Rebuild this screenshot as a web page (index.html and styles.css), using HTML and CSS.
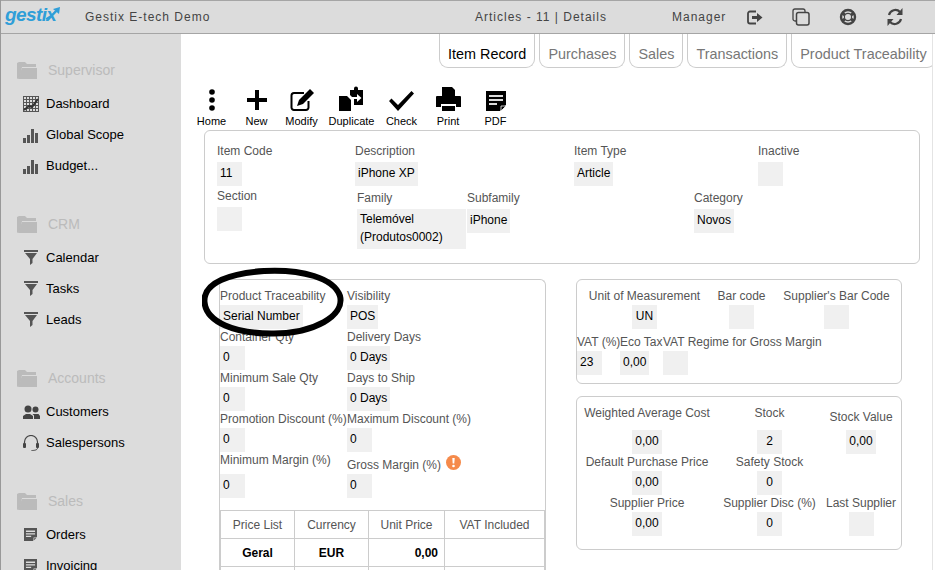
FILE: index.html
```html
<!DOCTYPE html>
<html>
	<head>
		<meta charset="utf-8">
		<title>Articles - 11 | Details</title>
		<link rel="stylesheet" href="styles.css">
	</head>
	<body>
		<svg class="defs" width="0" height="0">
			<symbol id="folder" viewBox="0 0 20 18">
				<path d="M2 1h6l2 2h9v3H5L3 16l-3 2V2z" fill="#bbb"/>
				<path d="M5 7h15v11H1z" fill="#bbb"/>
			</symbol>
			<symbol id="bars" viewBox="0 0 16 16">
				<path d="M0 11h3v5H0zM4 8h3v8H4zM8 2h3v14H8zM12 6h3v10h-3z" fill="#555"/>
			</symbol>
			<symbol id="funnel" viewBox="0 0 14 15">
				<path d="M0 0h14v2H0zM1 3h12L8.500 9v4L6 15V9z" fill="#555"/>
			</symbol>
			<symbol id="doc" viewBox="0 0 20 20">
				<path d="M0 0h20v14l-6 6H0z" fill="currentColor"/>
				<path d="M3 4h14v2H3zM3 8h14v2H3zM3 12h8v2H3z" fill="#dcdcdc"/>
				<path d="M15 20v-5h5z" fill="currentColor" stroke="#fff" stroke-width=".8"/>
			</symbol>
		</svg>

		<header class="topbar">
			<div class="logo">
				<span class="logo-text">gestix</span>
				<svg class="logo-arrow" width="14" height="13" viewBox="0 0 14 13"><path d="M0 12C4 10 7 8 10 4" fill="none" stroke="#2f9ed8" stroke-width="2"/><path d="M7 2l7-2-1 7z" fill="#2f9ed8"/></svg>
			</div>
			<div class="app-name">Gestix E-tech Demo</div>
			<div class="page-name">Articles - 11 | Details</div>
			<div class="user-name">Manager</div>
			<div class="top-icons">
				<svg width="16" height="15" viewBox="0 0 16 15"><path d="M9 1.500H3a2 2 0 0 0-2 2v8a2 2 0 0 0 2 2h6" fill="none" stroke="#444" stroke-width="1.800"/><path d="M5 6h5V3l5.500 4.500L10 12V9H5z" fill="#444"/></svg>
				<svg width="18" height="18" viewBox="0 0 18 18"><path d="M4 13H3a2 2 0 0 1-2-2V3a2 2 0 0 1 2-2h8a2 2 0 0 1 2 2v1" fill="none" stroke="#444" stroke-width="1.300"/><rect x="4.500" y="4.500" width="12.500" height="12.500" rx="2" fill="none" stroke="#444" stroke-width="1.500"/></svg>
				<svg width="18" height="18" viewBox="0 0 18 18"><circle cx="9" cy="9" r="7" fill="none" stroke="#444" stroke-width="2.400"/><circle cx="9" cy="9" r="3.600" fill="none" stroke="#444" stroke-width="1.200"/><path d="M3 5l3 2M15 5l-3 2M3 13l3-2M15 13l-3-2" stroke="#444" stroke-width="3"/></svg>
				<svg width="18" height="18" viewBox="0 0 18 18"><path d="M3 7a6.500 6.500 0 0 1 11-3" fill="none" stroke="#444" stroke-width="2.200"/><path d="M16.500 0v7h-6z" fill="#444"/><path d="M15 11a6.500 6.500 0 0 1-11 3" fill="none" stroke="#444" stroke-width="2.200"/><path d="M1.500 18v-7h6z" fill="#444"/></svg>
			</div>
		</header>

		<div class="layout">
			<nav class="sidebar">
				<div class="nav-group">
					<div class="nav-title"><svg width="20" height="18"><use href="#folder"/></svg>Supervisor</div>
					<a class="nav-item">
						<svg width="16" height="16" viewBox="0 0 16 16"><path d="M0 .5h16M0 3.500h16M0 6.500h16M0 9.500h16M0 12.500h16M0 15.500h16M.5 0v16M3.500 0v16M6.500 0v16M9.500 0v16M12.500 0v16M15.500 0v16" stroke="#555"/><path d="M1 14l5-4 3 1 6-8" fill="none" stroke="#333" stroke-width="2"/></svg>
						Dashboard
					</a>
					<a class="nav-item"><svg width="16" height="16"><use href="#bars"/></svg>Global Scope</a>
					<a class="nav-item"><svg width="16" height="16"><use href="#bars"/></svg>Budget...</a>
				</div>
				<div class="nav-group">
					<div class="nav-title"><svg width="20" height="18"><use href="#folder"/></svg>CRM</div>
					<a class="nav-item"><svg class="nav-funnel" width="14" height="15"><use href="#funnel"/></svg>Calendar</a>
					<a class="nav-item"><svg class="nav-funnel" width="14" height="15"><use href="#funnel"/></svg>Tasks</a>
					<a class="nav-item"><svg class="nav-funnel" width="14" height="15"><use href="#funnel"/></svg>Leads</a>
				</div>
				<div class="nav-group">
					<div class="nav-title"><svg width="20" height="18"><use href="#folder"/></svg>Accounts</div>
					<a class="nav-item">
						<svg class="nav-people" width="17" height="14" viewBox="0 0 17 14"><circle cx="5" cy="4" r="3.500" fill="#444"/><path d="M0 14v-3l3-2h4l3 2v3z" fill="#444"/><circle cx="12.500" cy="4.500" r="3" fill="#444"/><path d="M11 14v-3.500L9.500 9h6l1.500 2v3z" fill="#444"/></svg>
						Customers
					</a>
					<a class="nav-item">
						<svg width="16" height="16" viewBox="0 0 16 16"><path d="M1.500 9V7a6.500 6.500 0 0 1 13 0v2" fill="none" stroke="#444" stroke-width="1.200"/><rect x="0" y="8" width="3" height="5" rx="1" fill="#444"/><rect x="13" y="8" width="3" height="5" rx="1" fill="#444"/><path d="M14.500 13c0 2-3 2.500-6 2.500" fill="none" stroke="#444"/></svg>
						Salespersons
					</a>
				</div>
				<div class="nav-group">
					<div class="nav-title"><svg width="20" height="18"><use href="#folder"/></svg>Sales</div>
					<a class="nav-item"><svg class="nav-doc" width="13" height="13"><use href="#doc"/></svg>Orders</a>
					<a class="nav-item"><svg class="nav-doc" width="13" height="13"><use href="#doc"/></svg>Invoicing</a>
				</div>
			</nav>

			<main class="content">
				<div class="tabs">
					<div class="tab tab-active">Item Record</div>
					<div class="tab">Purchases</div>
					<div class="tab">Sales</div>
					<div class="tab">Transactions</div>
					<div class="tab">Product Traceability</div>
				</div>

				<div class="toolbar">
					<div class="tool tool-home">
						<svg width="22" height="22" viewBox="0 0 22 22"><circle cx="11" cy="3" r="2.800"/><circle cx="11" cy="11" r="2.800"/><circle cx="11" cy="19" r="2.800"/></svg>
						Home
					</div>
					<div class="tool">
						<svg width="22" height="22" viewBox="0 0 22 22"><path d="M9 1h4v8h8v4h-8v8H9v-8H1V9h8z"/></svg>
						New
					</div>
					<div class="tool">
						<svg width="24" height="22" viewBox="0 0 24 22"><path d="M14 4H4a2.500 2.500 0 0 0-2.500 2.500v12A2.500 2.500 0 0 0 4 21h12a2.500 2.500 0 0 0 2.500-2.500V12" fill="none" stroke="#000" stroke-width="2"/><path d="M20 0l4 4-11 11-6 2 2-6z"/></svg>
						Modify
					</div>
					<div class="tool tool-wide">
						<svg width="25" height="25" viewBox="0 0 25 25"><path d="M0 10h8l4 4v11H0z"/><path d="M11 4h4V2.500a2 2 0 0 1 4 0V4h5v15h-9v-6l-4-4z"/><path d="M12 11h6V8l4.500 4-4.500 4v-3h-6z" fill="#fff"/></svg>
						Duplicate
					</div>
					<div class="tool">
						<svg width="25" height="20" viewBox="0 0 25 20"><path d="M0 10l2.500-2.500L9 14 22.500 0 25 2.500 9 20z"/></svg>
						Check
					</div>
					<div class="tool tool-print">
						<svg width="25" height="24" viewBox="0 0 25 24"><path d="M6 0h10l3 3v7H6z"/><path d="M1 9h23a1 1 0 0 1 1 1v10h-5v-3H5v3H0V10a1 1 0 0 1 1-1z"/><path d="M6 19h13v5H6z"/></svg>
						Print
					</div>
					<div class="tool tool-pdf">
						<svg class="pdf-icon" width="20" height="20"><use href="#doc"/></svg>
						PDF
					</div>
				</div>

				<section class="panel panel-item">
					<div class="item-row item-row-top">
						<div class="field"><label>Item Code</label><span class="value">11</span></div>
						<div class="field"><label>Description</label><span class="value">iPhone XP</span></div>
						<div class="field"><label>Item Type</label><span class="value">Article</span></div>
						<div class="field"><label>Inactive</label><span class="value"></span></div>
					</div>
					<div class="item-row item-row-bottom">
						<div class="field"><label>Section</label><span class="value"></span></div>
						<div class="field field-low"><label>Family</label><span class="value value-block">Telemóvel (Produtos0002)</span></div>
						<div class="field field-low"><label>Subfamily</label><span class="value">iPhone</span></div>
						<div class="field field-low"><label>Category</label><span class="value">Novos</span></div>
					</div>
				</section>

				<div class="columns">
					<section class="panel panel-left">
						<svg class="mark" width="146" height="74" viewBox="0 0 146 74">
							<path d="M62 5C100 3 132 12 138 30C143 50 112 67 72 67.500C33 68 4 56 2.500 36C1 16 30 7 62 5z" fill="none" stroke="#000" stroke-width="6"/>
						</svg>
						<div class="left-fields">
							<div class="field"><label>Product Traceability</label><span class="value">Serial Number</span></div>
							<div class="field"><label>Visibility</label><span class="value">POS</span></div>
							<div class="field"><label>Container Qty</label><span class="value">0</span></div>
							<div class="field"><label>Delivery Days</label><span class="value">0 Days</span></div>
							<div class="field"><label>Minimum Sale Qty</label><span class="value">0</span></div>
							<div class="field"><label>Days to Ship</label><span class="value">0 Days</span></div>
							<div class="field"><label>Promotion Discount (%)</label><span class="value">0</span></div>
							<div class="field"><label>Maximum Discount (%)</label><span class="value">0</span></div>
							<div class="field field-margin"><label>Minimum Margin (%)</label><span class="value">0</span></div>
							<div class="field field-margin">
								<label class="label-low">Gross Margin (%)<svg class="warn" width="15" height="15" viewBox="0 0 15 15"><circle cx="7.500" cy="7.500" r="7.500" fill="#f58a4b"/><path d="M6.300 3h2.400l-.4 5.500H6.700z" fill="#fff"/><circle cx="7.500" cy="11" r="1.300" fill="#fff"/></svg></label>
								<span class="value">0</span>
							</div>
						</div>
						<table class="prices">
							<tr><th class="col-list">Price List</th><th class="col-cur">Currency</th><th class="col-price">Unit Price</th><th>VAT Included</th></tr>
							<tr><td>Geral</td><td>EUR</td><td class="num">0,00</td><td></td></tr>
							<tr><td></td><td></td><td></td><td></td></tr>
						</table>
					</section>

					<div class="right-col">
						<section class="panel panel-units">
							<div class="units-top">
								<div class="field"><label>Unit of Measurement</label><span class="value">UN</span></div>
								<div class="field"><label>Bar code</label><span class="value"></span></div>
								<div class="field"><label>Supplier's Bar Code</label><span class="value"></span></div>
							</div>
							<div class="units-bottom">
								<div class="field"><label>VAT (%)</label><span class="value">23</span></div>
								<div class="field"><label>Eco Tax</label><span class="value">0,00</span></div>
								<div class="field"><label>VAT Regime for Gross Margin</label><span class="value"></span></div>
							</div>
						</section>
						<section class="panel panel-stock">
							<div class="field field-tall"><label>Weighted Average Cost</label><span class="value">0,00</span></div>
							<div class="field field-tall"><label>Stock</label><span class="value">2</span></div>
							<div class="field field-tall"><label class="label-mid">Stock Value</label><span class="value">0,00</span></div>
							<div class="field"><label>Default Purchase Price</label><span class="value">0,00</span></div>
							<div class="field"><label>Safety Stock</label><span class="value">0</span></div>
							<div class="field"></div>
							<div class="field"><label>Supplier Price</label><span class="value">0,00</span></div>
							<div class="field"><label>Supplier Disc (%)</label><span class="value">0</span></div>
							<div class="field"><label>Last Supplier</label><span class="value"></span></div>
						</section>
					</div>
				</div>
			</main>
		</div>
	</body>
</html>
```

FILE: styles.css
```css
* {
	margin: 0;
	padding: 0;
	box-sizing: border-box;
}

html,
body {
	height: 570px;
	overflow: hidden;
}

body {
	font-family: "Liberation Sans", Arial, sans-serif;
	font-size: 12px;
	color: #000;
	background-color: #fff;
	border-left: 1px solid #999;
	display: flex;
	flex-direction: column;
}

.defs {
	position: absolute;
}

/* top bar */
.topbar {
	height: 34px;
	flex: none;
	display: flex;
	align-items: center;
	background-color: #dcdcdc;
	border-top: 1px solid #a5a5a5;
	border-bottom: 1px solid #a5a5a5;
	color: #444;
	letter-spacing: 1px;
	white-space: nowrap;
}

.logo {
	width: 84px;
	position: relative;
	padding-left: 4px;
}

.logo-text {
	font-size: 19px;
	font-style: italic;
	font-weight: bold;
	letter-spacing: -.6px;
	line-height: 26px;
	color: #2f9ed8;
	position: relative;
	top: -2px;
}

.logo-arrow {
	position: absolute;
	left: 45px;
	top: 3px;
}

.app-name {
	width: 390px;
}

.page-name {
	width: 197px;
}

.user-name {
	width: 75px;
}

.top-icons {
	display: flex;
	align-items: center;
	gap: 29px;
}

.top-icons svg {
	display: block;
}

.layout {
	flex: 1;
	display: flex;
	min-height: 0;
}

/* sidebar */
.sidebar {
	width: 180px;
	flex: none;
	background-color: #dcdcdc;
	padding-top: 27px;
	overflow: hidden;
}

.nav-group {
	padding-left: 16px;
	height: 154px;
}

.nav-group:nth-child(3) {
	height: 123px;
}

.nav-title {
	display: flex;
	align-items: center;
	gap: 11px;
	height: 18px;
	font-size: 14px;
	color: #bbb;
}

.nav-item {
	display: flex;
	align-items: center;
	height: 31px;
	font-size: 13px;
	gap: 7px;
	padding-left: 6px;
	position: relative;
	top: 9px;
}

.nav-doc {
	color: #555;
	margin: 0 2px 0 1px;
}

.nav-funnel {
	margin: 0 1px;
}

.nav-people {
	margin-right: -1px;
}

/* content */
.content {
	flex: 1;
	min-width: 0;
	overflow: hidden;
	border-right: 1px solid #e4e4e4;
	margin-right: 2px;
}

.tabs {
	display: flex;
	gap: 4px;
	padding-left: 258px;
	height: 34px;
}

.tab {
	flex: none;
	height: 34px;
	padding: 12px 8px 0;
	font-size: 14.400px;
	line-height: 17px;
	color: #777;
	border: 1px solid #ccc;
	border-top: 0;
	border-radius: 0 0 9px 9px;
	white-space: nowrap;
}

.tab-active {
	color: #000;
}

.toolbar {
	display: flex;
	padding: 16px 0 0 8px;
	height: 62px;
}

.tool {
	width: 45px;
	flex: none;
	display: flex;
	flex-direction: column;
	align-items: center;
	justify-content: flex-end;
	font-size: 11px;
	line-height: 13px;
	padding-bottom: 2px;
}

.tool svg {
	margin-bottom: 4px;
}

.tool-wide {
	width: 55px;
}

.tool-print {
	width: 48px;
}

.tool-pdf {
	width: 47px;
}

.pdf-icon {
	color: #000;
}

/* form pieces */
.panel {
	border: 1px solid #ccc;
	border-radius: 6px;
}

.field label {
	display: block;
	height: 17px;
	line-height: 17px;
	color: #555;
	white-space: nowrap;
}

.value {
	display: inline-block;
	min-width: 25px;
	height: 24px;
	padding: 0 3px;
	line-height: 23px;
	color: #000;
	background-color: #f0f0f0;
	vertical-align: top;
}

/* item panel */
.panel-item {
	margin: 0 12px 0 23px;
	height: 134px;
	padding: 12px 12px 0;
}

.panel-item .field label {
	height: 19px;
}

.item-row {
	display: grid;
}

.item-row-top {
	grid-template-columns: 138px 219px 184px auto;
	height: 45px;
}

.item-row-bottom {
	grid-template-columns: 140px 110px 227px auto;
}

.field-low {
	padding-top: 2px;
}

.value-block {
	display: block;
	width: 109px;
	height: 40px;
	line-height: 18px;
	padding: 1px 3px 0;
}

/* columns below */
.columns {
	display: flex;
	align-items: flex-start;
	margin: 15px 0 0 38px;
}

.panel-left {
	width: 327px;
	height: 320px;
	flex: none;
	position: relative;
	padding-top: 8px;
	border-bottom: 0;
}

.mark {
	position: absolute;
	left: -18px;
	top: -14px;
	z-index: 2;
}

.left-fields {
	display: grid;
	grid-template-columns: 127px 1fr;
	grid-auto-rows: 41px;
}

.field-margin {
	height: 46px;
}

.field-margin .value {
	margin-top: 5px;
}

.label-low {
	position: relative;
	top: 5px;
}

.warn {
	position: absolute;
	left: 99px;
	top: -2px;
}

.prices {
	width: 325px;
	margin-top: 17px;
	border-collapse: collapse;
	table-layout: fixed;
	text-align: center;
}

.prices th,
.prices td {
	height: 28px;
	border: 1px solid #ccc;
}

.prices th {
	font-weight: normal;
	color: #555;
}

.prices td {
	font-weight: bold;
}

.prices .num {
	text-align: right;
	padding-right: 6px;
}

.col-list {
	width: 74px;
}

.col-cur {
	width: 74px;
}

.col-price {
	width: 76px;
}

.right-col {
	width: 326px;
	margin-left: 30px;
	flex: none;
	display: flex;
	flex-direction: column;
	gap: 12px;
}

.panel-units {
	height: 105px;
	padding-top: 8px;
}

.units-top {
	display: grid;
	grid-template-columns: 135px 59px 131px;
	text-align: center;
	height: 46px;
}

.units-bottom {
	display: flex;
}

.units-bottom .field:nth-child(1),
.units-bottom .field:nth-child(2) {
	width: 43px;
}

.panel-stock {
	height: 154px;
	padding-top: 8px;
	display: grid;
	grid-template-columns: 140px 105px 78px;
	grid-template-rows: 49px 41px 41px;
	text-align: center;
}

.field-tall label {
	height: 25px;
}

.label-mid {
	padding-top: 4px;
}
```
